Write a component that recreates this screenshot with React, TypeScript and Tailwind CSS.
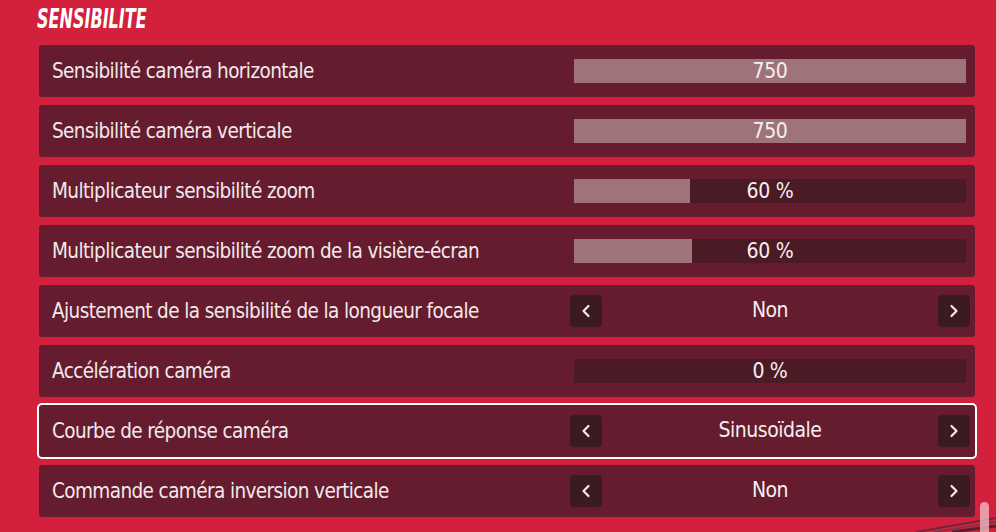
import { ChevronLeft, ChevronRight } from "lucide-react";

type Setting =
  | { label: string; kind: "slider"; value: string; fill: number }
  | { label: string; kind: "choice"; value: string };

const SETTINGS: Setting[] = [
  { label: "Sensibilité caméra horizontale", kind: "slider", value: "750", fill: 100 },
  { label: "Sensibilité caméra verticale", kind: "slider", value: "750", fill: 100 },
  { label: "Multiplicateur sensibilité zoom", kind: "slider", value: "60 %", fill: 29.6 },
  { label: "Multiplicateur sensibilité zoom de la visière-écran", kind: "slider", value: "60 %", fill: 30.1 },
  { label: "Ajustement de la sensibilité de la longueur focale", kind: "choice", value: "Non" },
  { label: "Accélération caméra", kind: "slider", value: "0 %", fill: 0 },
  { label: "Courbe de réponse caméra", kind: "choice", value: "Sinusoïdale" },
  { label: "Commande caméra inversion verticale", kind: "choice", value: "Non" },
];

const FONT = "font-['Liberation_Sans_Narrow','DejaVu_Sans_Condensed',sans-serif]";

function ArrowButton({ dir }: { dir: "left" | "right" }) {
  const Icon = dir === "left" ? ChevronLeft : ChevronRight;
  return (
    <button className="flex h-8 w-8 items-center justify-center rounded-[4px] bg-[#3c1a22] text-[#f3eaec]">
      <Icon className="h-5 w-5" strokeWidth={2.6} />
    </button>
  );
}

function Row({ s, selected }: { s: Setting; selected: boolean }) {
  return (
    <div
      className={`flex items-center bg-[#641c2e] ${
        selected
          ? "-mx-[2px] -my-[2px] h-[56px] rounded-[5px] border-2 border-white"
          : "h-[52px] rounded-[3px]"
      }`}
    >
      <div className={`flex-1 pl-[13px] text-[20.5px] tracking-[-0.6px] text-[#f1e9eb] ${FONT}`}>
        {s.label}
      </div>
      <div className="mr-[5px] flex w-[400px] items-center">
        {s.kind === "slider" ? (
          <div className="relative mx-[4px] h-6 flex-1 bg-[#4a1a25]">
            <div className="absolute inset-y-0 left-0 bg-[#9e737a]" style={{ width: `${s.fill}%` }} />
            <span
              className={`absolute inset-0 flex items-center justify-center text-[21px] leading-none tracking-[-0.3px] text-[#f6eff0] ${FONT}`}
            >
              {s.value}
            </span>
          </div>
        ) : (
          <div className="flex flex-1 items-center justify-between">
            <ArrowButton dir="left" />
            <span className={`text-[21px] tracking-[-0.5px] text-[#f6eff0] ${FONT}`}>{s.value}</span>
            <ArrowButton dir="right" />
          </div>
        )}
      </div>
    </div>
  );
}

export default function App() {
  return (
    <div className="relative h-[532px] w-[996px] overflow-hidden bg-[#d3203d]">
      <div className="pl-[39px] pr-[21px] pt-[3px]">
        <h2
          className={`-ml-[2px] h-[42px] origin-left scale-x-[0.66] text-[27px] font-bold italic leading-[32px] text-white ${FONT}`}
        >
          SENSIBILITE
        </h2>
        <div className="flex flex-col gap-2">
          {SETTINGS.map((s, i) => (
            <Row key={s.label} s={s} selected={i === 6} />
          ))}
        </div>
        <h2
          className={`-ml-[2px] mt-[16px] origin-left scale-x-[0.66] text-[27px] font-bold italic leading-[32px] text-white ${FONT}`}
        >
          VISÉE ASSISTÉE
        </h2>
      </div>
      {/* decorative stripes in the corner */}
      <svg className="absolute bottom-0 right-0 h-[16px] w-[80px]" viewBox="0 0 80 16">
        <path d="M0 16 L80 2" stroke="#6a2a3a" strokeWidth="2" />
        <path d="M18 16 L80 6" stroke="#7a3444" strokeWidth="1.5" />
        <path d="M36 16 L80 10" stroke="#5a1e2c" strokeWidth="3" />
      </svg>
      {/* scrollbar thumb */}
      <div className="absolute right-[7px] top-[502px] h-[60px] w-[9px] rounded-full bg-[#f0b8c2]/80" />
    </div>
  );
}
